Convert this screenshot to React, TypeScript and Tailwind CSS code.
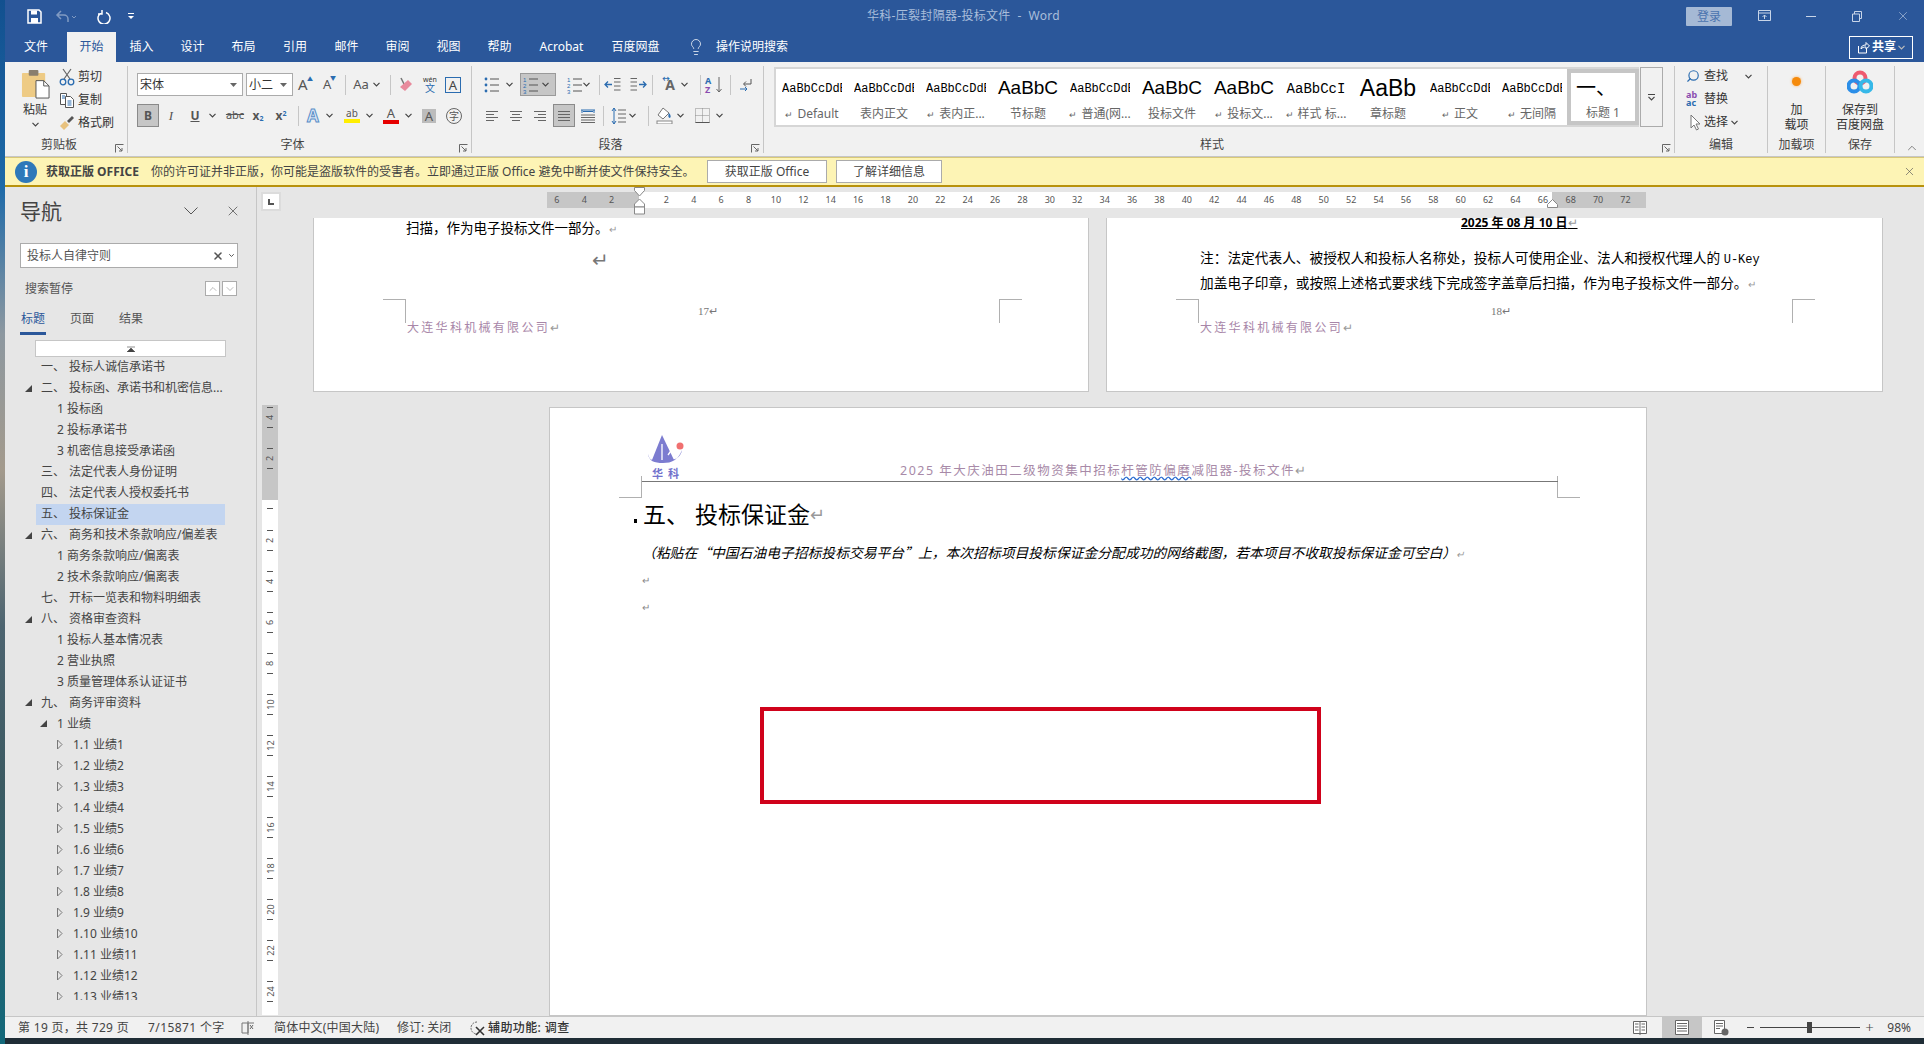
import { ReactNode } from "react";
import { ChevronDown, ChevronUp, Lightbulb, Search, X } from "lucide-react";

const tabs = [
  { label: "插入", w: "w-[51px]" },
  { label: "设计", w: "w-[51px]" },
  { label: "布局", w: "w-[51px]" },
  { label: "引用", w: "w-[52px]" },
  { label: "邮件", w: "w-[51px]" },
  { label: "审阅", w: "w-[51px]" },
  { label: "视图", w: "w-[51px]" },
  { label: "帮助", w: "w-[51px]" },
  { label: "Acrobat", w: "w-[73px]" },
  { label: "百度网盘", w: "w-[75px]" },
];

const styles = [
  { sample: "AaBbCcDdE", name: "Default", mark: true, big: 0 },
  { sample: "AaBbCcDdE", name: "表内正文", mark: false, big: 0 },
  { sample: "AaBbCcDdE", name: "表内正...", mark: true, big: 0 },
  { sample: "AaBbC", name: "节标题", mark: false, big: 1 },
  { sample: "AaBbCcDdE", name: "普通(网...", mark: true, big: 0 },
  { sample: "AaBbC", name: "投标文件", mark: false, big: 1 },
  { sample: "AaBbC", name: "投标文...", mark: true, big: 1 },
  { sample: "AaBbCcI", name: "样式 标...", mark: true, big: 3 },
  { sample: "AaBb", name: "章标题", mark: false, big: 2 },
  { sample: "AaBbCcDdE", name: "正文", mark: true, big: 0 },
  { sample: "AaBbCcDdE", name: "无间隔", mark: true, big: 0 },
];

type NavItem = { num?: string; text: string; level: 1 | 2 | 3; open?: boolean; active?: boolean };

const navItems: NavItem[] = [
  { num: "一、", text: "投标人诚信承诺书", level: 1 },
  { num: "二、", text: "投标函、承诺书和机密信息...", level: 1, open: true },
  { text: "1 投标函", level: 2 },
  { text: "2 投标承诺书", level: 2 },
  { text: "3 机密信息接受承诺函", level: 2 },
  { num: "三、", text: "法定代表人身份证明", level: 1 },
  { num: "四、", text: "法定代表人授权委托书", level: 1 },
  { num: "五、", text: "投标保证金", level: 1, active: true },
  { num: "六、", text: "商务和技术条款响应/偏差表", level: 1, open: true },
  { text: "1 商务条款响应/偏离表", level: 2 },
  { text: "2 技术条款响应/偏离表", level: 2 },
  { num: "七、", text: "开标一览表和物料明细表", level: 1 },
  { num: "八、", text: "资格审查资料", level: 1, open: true },
  { text: "1 投标人基本情况表", level: 2 },
  { text: "2 营业执照", level: 2 },
  { text: "3 质量管理体系认证证书", level: 2 },
  { num: "九、", text: "商务评审资料", level: 1, open: true },
  { text: "1 业绩", level: 2, open: true },
  ...Array.from({ length: 13 }, (_, i): NavItem => ({ text: `1.${i + 1} 业绩${i + 1}`, level: 3, open: false })),
];

const rulerWhite = Array.from({ length: 33 }, (_, i) => (i + 1) * 2);

function Chev({ className = "" }: { className?: string }) {
  return (
    <svg width="7" height="5" viewBox="0 0 7 5" className={`shrink-0 ${className}`}>
      <path d="M0.5 0.8 3.500 3.800 6.500 0.8" fill="none" stroke="#444" strokeWidth="1.200" />
    </svg>
  );
}

function Sep({ className = "" }: { className?: string }) {
  return <div className={`w-px h-[20px] shrink-0 bg-[#c6c6c6] ${className}`} />;
}

function Lines({ kind }: { kind: "left" | "center" | "right" | "justify" }) {
  const rows =
    kind === "left"
      ? [[1, 13], [1, 9], [1, 13], [1, 9]]
      : kind === "center"
        ? [[1, 13], [3, 11], [1, 13], [3, 11]]
        : kind === "right"
          ? [[1, 13], [5, 13], [1, 13], [5, 13]]
          : [[1, 13], [1, 13], [1, 13], [1, 13]];
  return (
    <svg width="14" height="14" viewBox="0 0 14 14" className="shrink-0">
      {rows.map((r, i) => (
        <line key={i} x1={r[0]} x2={r[1]} y1={2.5 + i * 3} y2={2.5 + i * 3} stroke="#666" />
      ))}
    </svg>
  );
}

function ListIcon({ numbered = false }: { numbered?: boolean }) {
  return (
    <svg width="16" height="18" viewBox="0 0 16 18" className="shrink-0">
      {[3, 9, 15].map((y, i) => (
        <g key={y}>
          {numbered ? (
            <text x="0" y={y + 2.5} fontSize="6" fill="#2b6cb0" fontFamily="Liberation Sans">{i + 1}</text>
          ) : (
            <circle cx="2" cy={y} r="1.400" fill="#2b6cb0" />
          )}
          <line x1="6" x2="15" y1={y} y2={y} stroke="#555" />
        </g>
      ))}
    </svg>
  );
}

function IndentIcon({ flip = false }: { flip?: boolean }) {
  return (
    <svg width="17" height="15" viewBox="0 0 17 15" className={flip ? "-scale-x-100 shrink-0" : "shrink-0"}>
      <path d="M1 7.500h7M4 4.500 1 7.500l3 3" fill="none" stroke="#2b6cb0" strokeWidth="1.300" />
      {[1.5, 5, 9, 13].map((y) => (
        <line key={y} x1="10" x2="16.500" y1={y} y2={y} stroke="#666" />
      ))}
    </svg>
  );
}

function Group({ label, w, expander, children }: { label: string; w: string; expander?: boolean; children: ReactNode }) {
  return (
    <div className={`${w} h-[87px] mt-[4px] shrink-0 flex flex-col border-r border-[#c6c6c6] relative`}>
      <div className="flex-1 min-h-0">{children}</div>
      <div className={`h-[17px] text-center text-[12px] leading-[17px] text-[#444] ${expander ? "pr-[14px]" : ""}`}>{label}</div>
      {expander && (
        <svg width="9" height="9" viewBox="0 0 9 9" className="absolute right-[3px] bottom-0">
          <path d="M0.5 8.500V0.5H8.500M2.500 2.500 7 7M4 7h3V4" fill="none" stroke="#666" />
        </svg>
      )}
    </div>
  );
}

function ClipboardGroup() {
  return (
    <div className="flex h-full">
      <div className="w-[54px] pl-[6px] flex flex-col items-center pt-[4px]">
        <svg width="29" height="29" viewBox="0 0 30 30">
          <rect x="1" y="3" width="24" height="25" rx="1" fill="#eecb85" />
          <rect x="8" y="0" width="10" height="6" rx="1" fill="#8a7f6e" />
          <path d="M15.500 11h8l5.500 5.500V29h-13.500z" fill="#fff" stroke="#555" />
          <path d="M23.500 11v5.500H29" fill="none" stroke="#555" />
        </svg>
        <div className="text-[12px] leading-[16px] mt-[3px] text-[#333]">粘贴</div>
        <Chev className="mt-[4px]" />
      </div>
      <div className="flex flex-col pt-[2px] gap-[5px] text-[12px] leading-[18px] text-[#333]">
        <div className="flex items-center gap-[3px]">
          <svg width="16" height="18" viewBox="0 0 16 18">
            <path d="M4 1l7 10M12 1 5 11" stroke="#666" strokeWidth="1.200" />
            <circle cx="4" cy="14" r="2.800" fill="none" stroke="#2b6cb0" strokeWidth="1.300" />
            <circle cx="12" cy="14" r="2.800" fill="none" stroke="#2b6cb0" strokeWidth="1.300" />
          </svg>
          剪切
        </div>
        <div className="flex items-center gap-[3px]">
          <svg width="16" height="16" viewBox="0 0 16 16">
            <path d="M1.500 1.500h6v11h-6z" fill="#fff" stroke="#555" />
            <path d="M6.500 4.500h5l3 3v8h-8z" fill="#fff" stroke="#555" />
            <path d="M8.500 9h4M8.500 11h4M8.500 13h4M3 4h3M3 6h3" stroke="#2b6cb0" />
          </svg>
          复制
        </div>
        <div className="flex items-center gap-[3px]">
          <svg width="16" height="16" viewBox="0 0 16 16">
            <path d="M1 11 6 6l4 4-5 5z" fill="#e8c27e" />
            <path d="M8 6l5-5 2 2-5 5z" fill="#555" />
          </svg>
          格式刷
        </div>
      </div>
    </div>
  );
}

function FontGroup() {
  return (
    <div className="pl-[9px]">
      <div className="flex items-center h-[23px] mt-[7px] text-[#555]">
        <div className="w-[106px] h-[23px] shrink-0 bg-white border border-[#ababab] flex items-center justify-between px-[2px] text-[12px] text-[#333]">
          宋体
          <svg width="7" height="4" className="mr-[3px]"><path d="M0 0h7L3.500 4z" fill="#666" /></svg>
        </div>
        <div className="w-[47px] h-[23px] shrink-0 ml-[3px] bg-white border border-[#ababab] flex items-center justify-between px-[2px] text-[12px] text-[#333]">
          小二
          <svg width="7" height="4" className="mr-[3px]"><path d="M0 0h7L3.500 4z" fill="#666" /></svg>
        </div>
        <span className="ml-[5px] text-[15px] leading-none relative w-[16px] shrink-0">A<span className="absolute -top-[1px] left-[9px] text-[6px] text-[#2b6cb0]">▲</span></span>
        <span className="ml-[9px] text-[13px] leading-none relative w-[14px] shrink-0">A<span className="absolute -top-[3px] left-[7px] text-[6px] text-[#2b6cb0]">▼</span></span>
        <Sep className="ml-[8px]" />
        <span className="ml-[5px] w-[20px] shrink-0 text-center text-[13px]">Aa</span>
        <Chev className="ml-[2px]" />
        <Sep className="ml-[10px]" />
        <svg width="16" height="16" viewBox="0 0 16 16" className="ml-[7px] shrink-0">
          <path d="M3 1 8 11" stroke="#777" strokeWidth="1.500" />
          <path d="M2 10 10 3l4 4-7 7z" fill="#e88a9c" />
        </svg>
        <span className="ml-[8px] w-[16px] shrink-0 flex flex-col items-center leading-none">
          <span className="text-[7px] text-[#333]">wén</span>
          <span className="text-[10px] text-[#2b6cb0]">文</span>
        </span>
        <span className="ml-[7px] w-[16px] h-[16px] shrink-0 border border-[#2b6cb0] text-[13px] leading-[14px] text-center text-[#444]">A</span>
      </div>
      <div className="flex items-center h-[23px] mt-[8px] text-[#555]">
        <span className="w-[22px] h-[23px] shrink-0 bg-[#c6c6c6] border border-[#8a8a8a] text-[12px] font-bold leading-[21px] text-center">B</span>
        <span className="ml-[4px] w-[16px] shrink-0 text-[13px] italic font-['Liberation_Serif',serif] text-center">I</span>
        <span className="ml-[8px] w-[16px] shrink-0 text-center text-[12px] underline font-bold">U</span>
        <Chev className="ml-[6px]" />
        <span className="ml-[9px] w-[20px] shrink-0 text-center text-[11px] line-through">abc</span>
        <span className="ml-[3px] w-[20px] shrink-0 text-center text-[12px] font-bold">x<sub className="text-[7px] text-[#2b6cb0]">2</sub></span>
        <span className="ml-[3px] w-[20px] shrink-0 text-center text-[12px] font-bold">x<sup className="text-[7px] text-[#2b6cb0]">2</sup></span>
        <Sep className="ml-[7px]" />
        <span className="ml-[5px] w-[18px] shrink-0 text-center text-[17px] font-bold text-[#dbe8f7] [-webkit-text-stroke:1px_#5a8fc8] leading-none">A</span>
        <Chev className="ml-[4px]" />
        <span className="ml-[11px] w-[16px] shrink-0 flex flex-col items-center leading-none">
          <span className="text-[10px]">ab</span>
          <span className="w-[16px] h-[4px] bg-[#ffee00] mt-[1px]" />
        </span>
        <Chev className="ml-[6px]" />
        <span className="ml-[10px] w-[16px] shrink-0 flex flex-col items-center leading-none">
          <span className="text-[13px]">A</span>
          <span className="w-[16px] h-[4px] bg-[#e60000]" />
        </span>
        <Chev className="ml-[6px]" />
        <span className="ml-[10px] w-[14px] h-[14px] shrink-0 bg-[#bcbcbc] text-[13px] leading-[14px] text-center">A</span>
        <span className="ml-[10px] w-[16px] h-[16px] shrink-0 rounded-full border border-[#666] text-[10px] leading-[14px] text-center">字</span>
      </div>
    </div>
  );
}

function ParagraphGroup() {
  return (
    <div className="pl-[12px]">
      <div className="flex items-center h-[23px] mt-[7px]">
        <ListIcon />
        <Chev className="ml-[6px]" />
        <div className="ml-[7px] w-[36px] h-[23px] shrink-0 bg-[#c6c6c6] border border-[#9a9a9a] flex items-center gap-[3px] pl-[2px]">
          <ListIcon numbered />
          <Chev />
        </div>
        <div className="ml-[11px]"><ListIcon numbered /></div>
        <Chev />
        <Sep className="ml-[9px]" />
        <div className="ml-[4px]"><IndentIcon /></div>
        <div className="ml-[9px]"><IndentIcon flip /></div>
        <Sep className="ml-[5px]" />
        <span className="ml-[9px] w-[16px] shrink-0 text-[14px] font-bold text-[#666] leading-none text-center relative">A<span className="absolute -top-[3px] left-0 text-[8px] text-[#2b6cb0]">↔</span></span>
        <Chev className="ml-[3px]" />
        <Sep className="ml-[12px]" />
        <span className="ml-[4px] w-[10px] shrink-0 flex flex-col leading-[9px] text-[9px] font-bold"><span className="text-[#2b6cb0]">A</span><span className="text-[#8a4db0]">Z</span></span>
        <svg width="6" height="16" viewBox="0 0 6 16" className="ml-[1px] shrink-0"><path d="M3 0v15M0.500 12 3 15l2.500-3" fill="none" stroke="#666" /></svg>
        <Sep className="ml-[8px]" />
        <svg width="14" height="14" viewBox="0 0 14 14" className="ml-[8px] shrink-0">
          <path d="M12 1v5H5M7 3.500 4.500 6 7 8.500" fill="none" stroke="#555" />
          <path d="M1 11h7M6 9l2 2-2 2" fill="none" stroke="#2b6cb0" />
        </svg>
      </div>
      <div className="flex items-center h-[23px] mt-[8px] ml-[1px]">
        <Lines kind="left" />
        <div className="ml-[10px]"><Lines kind="center" /></div>
        <div className="ml-[10px]"><Lines kind="right" /></div>
        <div className="ml-[6px] w-[22px] h-[23px] shrink-0 bg-[#c6c6c6] border border-[#8a8a8a] flex items-center justify-center"><Lines kind="justify" /></div>
        <svg width="18" height="16" viewBox="0 0 18 16" className="ml-[4px] shrink-0">
          <path d="M2 2h14" stroke="#2b6cb0" />
          <path d="M3 2v3M15 2v3M4 3.500h10" stroke="#2b6cb0" fill="none" />
          <path d="M2 7h14M2 9.500h14M2 12h14M2 14.500h14" stroke="#666" />
        </svg>
        <Sep className="ml-[6px]" />
        <svg width="15" height="18" viewBox="0 0 15 18" className="ml-[7px] shrink-0">
          <path d="M3 1v16M1 4l2-3 2 3M1 14l2 3 2-3" fill="none" stroke="#2b6cb0" />
          <path d="M7 3h8M7 7h8M7 11h8M7 15h8" stroke="#666" />
        </svg>
        <Chev className="ml-[3px]" />
        <Sep className="ml-[12px]" />
        <svg width="17" height="17" viewBox="0 0 17 17" className="ml-[7px] shrink-0">
          <path d="M7 1 2 8l5 4 6-6z" fill="#fff" stroke="#777" />
          <path d="M13 6c2 2 2 4 1 5-2 0-2-3-1-5z" fill="#2b6cb0" />
          <rect x="1" y="14" width="15" height="3" fill="#fff" stroke="#888" />
        </svg>
        <Chev className="ml-[4px]" />
        <svg width="15" height="15" viewBox="0 0 15 15" className="ml-[11px] shrink-0">
          <path d="M.5.500h14v14H.5zM7.500.5v14M.5 7.500h14" fill="none" stroke="#888" strokeDasharray="1 1" />
          <path d="M.5 14.500h14" stroke="#555" />
        </svg>
        <Chev className="ml-[6px]" />
      </div>
    </div>
  );
}

function StylesGroup() {
  return (
    <div className="flex pl-[10px] pt-[2px]">
      <div className="flex w-[865px] h-[60px] bg-white border-y-2 border-l-2 border-[#d6d6d6] -mt-[1px] overflow-hidden">
        {styles.map((s) => (
          <div key={s.name} className="w-[72px] shrink-0 flex flex-col items-center">
            <div
              className={
                s.big === 0
                  ? "h-[36px] w-[60px] overflow-hidden whitespace-nowrap text-[12px] leading-[40px] text-black font-['Liberation_Mono',monospace]"
                  : s.big === 1
                    ? "h-[36px] w-[62px] overflow-hidden whitespace-nowrap text-[19px] leading-[38px] text-center text-black font-['Liberation_Sans',sans-serif]"
                    : s.big === 3
                      ? "h-[36px] w-[62px] overflow-hidden whitespace-nowrap text-[14px] leading-[40px] text-center text-black font-['Liberation_Mono',monospace]"
                      : "h-[36px] w-[62px] overflow-hidden whitespace-nowrap text-[23px] leading-[38px] text-center text-black font-['Liberation_Sans',sans-serif]"
              }
            >
              {s.sample}
            </div>
            <div className="text-[12px] leading-[18px] text-[#666] whitespace-nowrap">
              {s.mark && <span className="text-[9px] mr-[4px]">↵</span>}
              {s.name}
            </div>
          </div>
        ))}
        <div className="w-[72px] shrink-0 border-[4px] border-[#c6c6c6] flex flex-col items-center -ml-[1px] bg-white">
          <div className="h-[32px] w-full pl-[5px] text-[20px] leading-[30px] text-black whitespace-nowrap overflow-hidden">一、</div>
          <div className="text-[12px] leading-[16px] text-[#666]">标题 1</div>
        </div>
      </div>
      <div className="w-[23px] h-[60px] -mt-[1px] ml-[1px] border border-[#ababab] flex flex-col items-center justify-center gap-[1px]">
        <div className="w-[7px] h-px bg-[#444]" />
        <Chev />
      </div>
    </div>
  );
}

function EditGroup() {
  return (
    <div className="pl-[11px] pt-[1px] flex flex-col gap-[5px] text-[12px] leading-[18px] text-[#333]">
      <div className="flex items-center">
        <Search size={14} color="#2b6cb0" className="-scale-x-100" strokeWidth={2} />
        <span className="ml-[4px]">查找</span>
        <Chev className="ml-[17px]" />
      </div>
      <div className="flex items-center">
        <span className="w-[15px] text-[9px] leading-[8px] font-bold"><span className="text-[#8a4db0]">ab</span><br /><span className="text-[#2b6cb0]">ac</span></span>
        <span className="ml-[3px]">替换</span>
      </div>
      <div className="flex items-center">
        <svg width="12" height="17" viewBox="0 0 12 17" className="ml-[3px]">
          <path d="M2 1v13l3-3 2.500 5 2-1-2.500-5H11z" fill="#fff" stroke="#777" />
        </svg>
        <span className="ml-[3px]">选择</span>
        <Chev className="ml-[3px]" />
      </div>
    </div>
  );
}

function BaiduLogo() {
  return (
    <svg width="26" height="26" viewBox="0 0 26 26">
      <circle cx="13" cy="9" r="5.500" fill="none" stroke="#ef5a6f" strokeWidth="4" />
      <circle cx="7" cy="17" r="5.500" fill="none" stroke="#2b8ee8" strokeWidth="4" />
      <circle cx="19" cy="17" r="5.500" fill="none" stroke="#36b8e8" strokeWidth="4" />
    </svg>
  );
}

function CropMark({ className }: { className: string }) {
  return <div className={`absolute w-[23px] h-[24px] border-[#b0b0b0] ${className}`} />;
}

function TopPage({ num, w, children }: { num: string; w: string; children: ReactNode }) {
  return <div className={`${w} h-[174px] bg-white border-x border-b border-[#c6c6c6] relative shrink-0`} data-page={num}>{children}</div>;
}

function Footer({ num, numClass }: { num: string; numClass: string }) {
  return (
    <>
      <CropMark className="left-[69px] top-[81px] border-t border-r" />
      <CropMark className="left-[685px] top-[81px] border-t border-l" />
      <div className={`absolute top-[86px] text-[11px] leading-[14px] text-[#777] font-['Liberation_Serif',serif] ${numClass}`}>{num}↵</div>
      <div className="absolute left-[93px] top-[101px] text-[12px] leading-[18px] tracking-[2.300px] text-[#a886a8] whitespace-nowrap">大连华科机械有限公司<span className="text-[#999] tracking-normal">↵</span></div>
    </>
  );
}

function NavRow({ item }: { item: NavItem }) {
  return (
    <div className="h-[20.970px] flex items-center text-[12px] text-[#444] whitespace-nowrap">
      <div className="w-[16px] flex justify-center">
        {item.level === 1 && item.open && (
          <svg width="7" height="7"><path d="M7 0v7H0z" fill="#444" /></svg>
        )}
      </div>
      <div className={`w-[189px] h-full flex items-center leading-none ${item.active ? "bg-[#c3d5f0]" : ""} ${item.level === 1 ? "pl-[5px]" : item.level === 2 ? "pl-[4px]" : "pl-[20px]"}`}>
        {item.level === 2 && (
          <div className="w-[8px] mr-[9px]">
            {item.open && <svg width="7" height="7"><path d="M7 0v7H0z" fill="#444" /></svg>}
          </div>
        )}
        {item.level === 3 && (
          <svg width="8" height="11" viewBox="0 0 8 11" className="mr-[9px]"><path d="M1.500 1v9L6 5.500z" fill="none" stroke="#777" /></svg>
        )}
        {item.num && <span className="w-[28px]">{item.num}</span>}
        {item.text}
      </div>
    </div>
  );
}

function RulerCell({ n }: { n: number }) {
  return (
    <div className="h-[41px] shrink-0 flex flex-col justify-center items-center gap-[5px]">
      <div className="w-[6px] h-px bg-[#555]" />
      <span className="-rotate-90 h-[9px] leading-[9px]">{n}</span>
      <div className="w-[6px] h-px bg-[#555]" />
    </div>
  );
}

function StatusBar() {
  return (
    <div className="h-[22px] shrink-0 bg-[#f1f1f1] border-t border-[#c6c6c6] flex items-center text-[12px] text-[#444] whitespace-nowrap">
      <span className="ml-[13px] w-[111px] tracking-[.3px]">第 19 页，共 729 页</span>
      <span className="ml-[19px] w-[75px] tracking-[.4px]">7/15871 个字</span>
      <svg width="14" height="16" viewBox="0 0 14 16" className="ml-[18px]">
        <path d="M7 1v14M1 3h6v10H1zM7 3l6 0" fill="none" stroke="#777" />
        <path d="M9 5l3 4M12 5 9 9" stroke="#666" />
      </svg>
      <span className="ml-[19px] w-[103px] tracking-[.2px]">简体中文(中国大陆)</span>
      <span className="ml-[20px] w-[55px]">修订: 关闭</span>
      <svg width="16" height="16" viewBox="0 0 16 16" className="ml-[18px]">
        <path d="M7 2A6 6 0 1 0 7 14" fill="none" stroke="#666" strokeDasharray="2 1" />
        <path d="M6 7l8 8M14 7l-8 8" stroke="#333" strokeWidth="1.600" />
      </svg>
      <span className="ml-[2px] font-medium text-[#333] tracking-[.4px]">辅助功能: 调查</span>
      <div className="ml-auto flex items-center h-full">
        <svg width="14" height="15" viewBox="0 0 14 15">
          <path d="M.5 1.500h13v12H.5zM7 1v14" fill="#fff" stroke="#666" />
          <path d="M2 4h3.500M2 7h3.500M2 10h3.500M8.500 4H12M8.500 7H12M8.500 10H12" stroke="#666" />
        </svg>
        <div className="ml-[15px] w-[40px] h-full bg-[#c6c6c6] flex items-center justify-center">
          <svg width="14" height="15" viewBox="0 0 14 15">
            <path d="M.5.500h13v14H.5z" fill="#fff" stroke="#666" />
            <path d="M2 3.500h10M2 6h10M2 8.500h10M2 11h10" stroke="#666" />
          </svg>
        </div>
        <svg width="15" height="16" viewBox="0 0 15 16" className="ml-[12px]">
          <path d="M.5.500h10v13H.5z" fill="#fff" stroke="#666" />
          <path d="M2 3.500h7M2 6h7M2 8.500h4" stroke="#666" />
          <circle cx="11" cy="12" r="3.500" fill="#666" />
        </svg>
        <span className="ml-[18px] w-[7px] h-px bg-[#444]" />
        <div className="ml-[6px] w-[100px] h-px bg-[#444] relative">
          <div className="absolute left-[47px] -top-[5px] w-[5px] h-[11px] bg-[#444]" />
        </div>
        <span className="ml-[5px] w-[9px] text-[15px] leading-none font-light">+</span>
        <span className="ml-[13px] mr-[13px]">98%</span>
      </div>
    </div>
  );
}

export default function App() {
  return (
    <div className="w-[1924px] h-[1044px] overflow-hidden flex bg-[#1f2d36] font-['Noto_Sans','Noto_Sans_CJK_SC',sans-serif]">
      <div className="w-[5px] shrink-0 bg-[linear-gradient(180deg,#12508f_0%,#1e6aa8_18%,#8d98a0_32%,#a39a8c_45%,#4d6470_60%,#3c5a62_75%,#12687a_100%)]" />
      <div className="flex-1 min-w-0 flex flex-col">
        <div className="h-[1038px] flex flex-col bg-[#e6e6e6]">
          {/* title bar */}
          <div className="h-[32px] shrink-0 bg-[#2b579a] flex items-center relative text-white">
            <svg width="15" height="15" viewBox="0 0 15 15" className="ml-[22px]">
              <path d="M1 1h11l2 2v11H1z" fill="none" stroke="#fff" strokeWidth="1.500" />
              <path d="M4 1.500h6v4H4zM4 9h7v5H4z" fill="#fff" />
            </svg>
            <svg width="22" height="15" viewBox="0 0 22 15" className="ml-[13px] opacity-40">
              <path d="M6 2 2 6l4 4M2 6h7a4 4 0 0 1 4 4v3" fill="none" stroke="#fff" strokeWidth="1.500" />
              <path d="M17 7l2 2 2-2" fill="none" stroke="#fff" />
            </svg>
            <svg width="15" height="15" viewBox="0 0 15 15" className="ml-[19px]">
              <path d="M5 2.500a6 6 0 1 0 4 0M5 0v4H1" fill="none" stroke="#fff" strokeWidth="1.500" transform="translate(1 1)" />
            </svg>
            <div className="ml-[17px] flex flex-col items-center gap-[2px]">
              <div className="w-[6px] h-px bg-white" />
              <svg width="6" height="3"><path d="M0 0h6L3 3z" fill="#fff" /></svg>
            </div>
            <div className="absolute left-[862px] top-0 h-full flex items-center text-[12px] tracking-[.3px] text-[#a9bedb] whitespace-nowrap">华科-压裂封隔器-投标文件&nbsp; -&nbsp; Word</div>
            <div className="ml-auto flex items-center">
              <div className="w-[46px] h-[19px] rounded-[1px] bg-[#a5b9d5] text-[#4a73ae] text-[12px] leading-[19px] text-center">登录</div>
              <svg width="13" height="12" viewBox="0 0 13 12" className="ml-[26px]">
                <path d="M.5.500h12v10H.5zM.5 3h12M6.500 9V5M4.500 7l2-2 2 2" fill="none" stroke="#c8d5e8" />
              </svg>
              <div className="ml-[35px] w-[10px] h-px bg-[#c8d5e8]" />
              <svg width="10" height="11" viewBox="0 0 10 11" className="ml-[36px]">
                <path d="M.5 3h7v7.500h-7zM2.500 3V.5h7v7H7.500" fill="none" stroke="#c8d5e8" />
              </svg>
              <X size={14} color="#c8d5e8" strokeWidth={1} className="ml-[34px] mr-[14px]" />
            </div>
          </div>
          {/* tabs */}
          <div className="h-[30px] shrink-0 bg-[#2b579a] flex items-center text-[12px] text-white whitespace-nowrap">
            <div className="w-[62px] text-center">文件</div>
            <div className="w-[49px] h-full bg-[#f1f1f1] text-[#2b579a] flex items-center justify-center">开始</div>
            {tabs.map((t) => (
              <div key={t.label} className={`${t.w} text-center`}>{t.label}</div>
            ))}
            <Lightbulb size={18} color="#fff" strokeWidth={1} className="ml-[14px]" />
            <span className="ml-[11px]">操作说明搜索</span>
            <div className="ml-auto mr-[11px] w-[64px] h-[23px] border border-white flex items-center justify-center gap-[2px] font-bold">
              <svg width="13" height="13" viewBox="0 0 13 13">
                <path d="M1.500 5v7h8V8M4 8c0-3 2-4 5-4V1.500l3.500 3.500L9 8V6C7 6 5 6.500 4 8z" fill="none" stroke="#fff" />
              </svg>
              共享
              <Chev className="invert" />
            </div>
          </div>
          {/* ribbon */}
          <div className="h-[95px] shrink-0 bg-[#f1f1f1] flex relative border-b border-[#c6c6c6]">
            <Group label="剪贴板" w="w-[123px]" expander><ClipboardGroup /></Group>
            <Group label="字体" w="w-[344px]" expander><FontGroup /></Group>
            <Group label="段落" w="w-[292px]" expander><ParagraphGroup /></Group>
            <Group label="样式" w="w-[911px]" expander><StylesGroup /></Group>
            <Group label="编辑" w="w-[93px]"><EditGroup /></Group>
            <Group label="加载项" w="w-[58px]">
              <div className="flex flex-col items-center pt-[11px] text-[12px] leading-[15px] text-[#333]">
                <div className="w-[9px] h-[9px] rounded-full bg-[#f58a0b] shadow-[0_0_3px_#f8b060]" />
                <div className="mt-[16px]">加</div>
                <div>载项</div>
              </div>
            </Group>
            <Group label="保存" w="w-[69px]">
              <div className="flex flex-col items-center pt-[3px] text-[12px] leading-[15px] text-[#333]">
                <BaiduLogo />
                <div className="mt-[7px]">保存到</div>
                <div>百度网盘</div>
              </div>
            </Group>
            <ChevronUp size={14} color="#555" strokeWidth={1.2} className="absolute right-[5px] bottom-[1px]" />
          </div>
          {/* activation bar */}
          <div className="h-[30px] shrink-0 bg-[#fdf4b5] border-t border-[#d8c878] border-b-2 border-b-[#b8920c] flex items-center text-[12px] text-[#444] whitespace-nowrap">
            <div className="ml-[10px] w-[22px] h-[22px] rounded-full bg-[#2f79b9] text-white flex items-center justify-center font-['Liberation_Serif',serif] font-bold text-[17px]">i</div>
            <span className="ml-[9px] w-[105px] font-bold">获取正版 OFFICE</span>
            <span className="w-[556px]">你的许可证并非正版，你可能是盗版软件的受害者。立即通过正版 Office 避免中断并使文件保持安全。</span>
            <div className="w-[120px] h-[23px] bg-white border border-[#ababab] text-center leading-[21px]">获取正版 Office</div>
            <div className="ml-[9px] w-[106px] h-[23px] bg-white border border-[#ababab] text-center leading-[21px]">了解详细信息</div>
            <X size={13} color="#555" strokeWidth={1.2} className="ml-auto mr-[8px]" />
          </div>
          {/* body */}
          <div className="flex-1 min-h-0 flex">
            <div className="w-[252px] shrink-0 border-r border-[#c6c6c6] flex flex-col pl-[15px]">
              <div className="flex items-center h-[44px] pt-[4px] text-[21px] text-[#444] leading-none">
                导航
                <svg width="14" height="8" viewBox="0 0 14 8" className="ml-[122px]"><path d="M.5.500 7 7 13.500.5" fill="none" stroke="#555" /></svg>
                <X size={16} color="#555" strokeWidth={1.2} className="ml-[27px]" />
              </div>
              <div className="w-[218px] h-[25px] mt-[12px] bg-white border border-[#ababab] flex items-center pl-[6px] text-[12px] text-[#555]">
                投标人自律守则
                <X size={12} color="#555" strokeWidth={3} className="ml-auto" />
                <Chev className="ml-[4px] mr-[2px] scale-75" />
              </div>
              <div className="flex items-center h-[15px] mt-[13px] pl-[5px] text-[12px] text-[#555]">
                搜索暂停
                <div className="ml-[132px] w-[15px] h-[15px] bg-white border border-[#ababab] flex items-center justify-center"><ChevronUp size={12} color="#777" strokeWidth={1} /></div>
                <div className="ml-[2px] w-[15px] h-[15px] bg-white border border-[#ababab] flex items-center justify-center"><ChevronDown size={12} color="#777" strokeWidth={1} /></div>
              </div>
              <div className="flex h-[24px] mt-[14px] text-[12px] text-[#555]">
                <div className="w-[26px] ml-0 h-[25px] text-center text-[#2b579a] border-b-[3px] border-[#2b579a]">标题</div>
                <div className="ml-[24px]">页面</div>
                <div className="ml-[25px]">结果</div>
              </div>
              <div className="ml-[15px] w-[191px] h-[17px] mt-[6px] bg-white border border-[#c6c6c6] flex items-center justify-center">
                <svg width="8" height="6"><path d="M0 1h8M4 2l4 4H0z" stroke="#444" fill="#444" strokeWidth=".6" /></svg>
              </div>
              <div className="h-[643px] overflow-hidden">
                {navItems.map((item) => (
                  <NavRow key={item.text} item={item} />
                ))}
              </div>
            </div>
            <div className="flex-1 min-w-0 flex flex-col overflow-hidden">
              {/* rulers */}
              <div className="h-[31px] shrink-0 flex pt-[5px]">
                <div className="ml-[4px] w-[20px] h-[19px] bg-white border-2 border-[#dcdcdc] flex items-center justify-center">
                  <div className="w-[6px] h-[6px] border-l-2 border-b-2 border-[#555]" />
                </div>
                <div className="ml-[266px] w-[1099px] h-[16px] flex relative text-[9px] leading-[16px] text-[#555] text-center">
                  <div className="w-[92px] bg-[#c6c6c6] flex justify-end pr-[13.700px]">
                    {[6, 4, 2].map((n) => <span key={n} className="w-[27.400px] shrink-0">{n}</span>)}
                  </div>
                  <div className="w-[913px] bg-white flex pl-[13.700px]">
                    {rulerWhite.map((n) => <span key={n} className="w-[27.400px] shrink-0">{n}</span>)}
                  </div>
                  <div className="w-[94px] bg-[#c6c6c6] flex pl-[5px]">
                    {[68, 70, 72].map((n) => <span key={n} className="w-[27.400px] shrink-0">{n}</span>)}
                  </div>
                  <svg width="11" height="28" viewBox="0 0 11 28" className="absolute left-[87px] -top-[5px]">
                    <path d="M.5.500h10v3L5.500 9 .5 3.500z" fill="#fff" stroke="#888" />
                    <path d="M5.500 12l5 5v3H.5v-3z" fill="#fff" stroke="#888" />
                    <path d="M.5 20h10v7H.5z" fill="#fff" stroke="#888" />
                  </svg>
                  <svg width="11" height="9" viewBox="0 0 11 9" className="absolute left-[1000px] top-[7px]">
                    <path d="M5.500.5l5 5v3H.5v-3z" fill="#fff" stroke="#888" />
                  </svg>
                </div>
              </div>
              {/* top pages */}
              <div className="h-[174px] shrink-0 flex gap-[17px] pl-[56px]">
                <TopPage num="17" w="w-[776px]">
                  <div className="pl-[92px] text-[13.500px] leading-[20px] text-black whitespace-nowrap">扫描，作为电子投标文件一部分。<span className="text-[#999] text-[10px]">↵</span></div>
                  <div className="pl-[278px] mt-[9px] text-[20px] leading-[24px] text-[#777]">↵</div>
                  <Footer num="17" numClass="left-[384px]" />
                </TopPage>
                <TopPage num="18" w="w-[777px]">
                  <div className="pl-[354px] h-[9px] text-[12px] leading-[9px] font-bold text-black whitespace-nowrap underline">2025 年 08 月 10 日<span className="text-[#999] font-normal">↵</span></div>
                  <div className="pl-[93px] mt-[18px] text-[13.700px] leading-[25px] text-black whitespace-nowrap">
                    <div className="h-[25px]">注：法定代表人、被授权人和投标人名称处，投标人可使用企业、法人和授权代理人的 <span className="font-['Liberation_Mono',monospace] text-[12px]">U-Key</span></div>
                    <div className="h-[25px]">加盖电子印章，或按照上述格式要求线下完成签字盖章后扫描，作为电子投标文件一部分。<span className="text-[#999] text-[10px]">↵</span></div>
                  </div>
                  <Footer num="18" numClass="left-[384px]" />
                </TopPage>
              </div>
              {/* main page */}
              <div className="mt-[15px] flex-1 min-h-0 flex">
                <div className="ml-[5px] w-[16px] h-[610px] -mt-[2px] shrink-0 flex flex-col overflow-hidden text-[9px] text-[#555]">
                  <div className="h-[95px] shrink-0 bg-[#c6c6c6] flex flex-col justify-end pb-[11px] items-center">
                    {[4, 2].map((n) => <RulerCell key={n} n={n} />)}
                    <div className="w-[6px] h-px bg-[#555] mt-[10px]" />
                  </div>
                  <div className="flex-1 bg-white flex flex-col items-center pt-[8px]">
                    <div className="w-[6px] h-px bg-[#555] mb-[11px] shrink-0" />
                    {Array.from({ length: 12 }, (_, i) => (i + 1) * 2).map((n) => <RulerCell key={n} n={n} />)}
                  </div>
                </div>
                <div className="ml-[271px] w-[1098px] shrink-0 h-[609px] bg-white border border-[#c6c6c6] relative">
                  <div className="absolute left-[69px] top-[68px] w-[23px] h-[22px] border-r border-b border-[#b0b0b0]" />
                  <div className="absolute left-[1007px] top-[68px] w-[23px] h-[22px] border-l border-b border-[#b0b0b0]" />
                  <div className="ml-[92px] w-[916px] h-[74px] border-b border-[#777] flex items-end pt-[25px] relative">
                    <div className="ml-[5px] w-[38px] flex flex-col items-center">
                      <svg width="38" height="32" viewBox="0 0 38 32">
                        <path d="M15 0 5 25h22z" fill="#7c7cd0" />
                        <path d="M15 9v16M21 20l5-7" stroke="#fff" strokeWidth="1.300" />
                        <path d="M1 19c1 7 6 9 15 9s15-3 19-13c-1 6-5 10-13 10H6C3 25 2 22 1 19z" fill="#7c7cd0" />
                        <circle cx="33" cy="11" r="3.500" fill="#f07070" />
                      </svg>
                      <div className="text-[11px] leading-[14px] font-bold tracking-[5px] text-[#7272cc] whitespace-nowrap pl-[4px]">华科</div>
                    </div>
                    <div className="ml-[215px] text-[12.500px] leading-[18px] tracking-[1.500px] text-[#a88aa8] whitespace-nowrap mb-[1px]">
                      2025 年大庆油田二级物资集中招标<span className="underline decoration-wavy decoration-[#2b6cd0]">杆管防偏磨</span>减阻器-投标文件<span className="text-[#999]">↵</span>
                    </div>
                  </div>
                  <div className="ml-[84px] mt-[18px] h-[28px] flex items-center text-[23px] leading-[28px] font-normal text-black whitespace-nowrap">
                    <div className="w-[3px] h-[4px] bg-black mt-[14px] mr-[6px]" />
                    五、 投标保证金<span className="text-[#999] text-[18px]">↵</span>
                  </div>
                  <div className="ml-[92px] mt-[14px] h-[20px] text-[13.800px] leading-[20px] italic text-black whitespace-nowrap font-['Noto_Sans_CJK_SC',sans-serif]">
                    （粘贴在“中国石油电子招标投标交易平台”上，本次招标项目投标保证金分配成功的网络截图，若本项目不收取投标保证金可空白）<span className="text-[#999] text-[10px]">↵</span>
                  </div>
                  <div className="ml-[92px] mt-[8px] h-[20px] text-[10px] leading-[20px] text-[#888]">↵</div>
                  <div className="ml-[92px] mt-[7px] h-[20px] text-[10px] leading-[20px] text-[#888]">↵</div>
                  <div className="ml-[210px] mt-[90px] w-[561px] h-[97px] border-[4px] border-[#d0021b]" />
                </div>
              </div>
            </div>
          </div>
          <StatusBar />
        </div>
        <div className="h-[6px] bg-[#1f2d36]" />
      </div>
    </div>
  );
}
